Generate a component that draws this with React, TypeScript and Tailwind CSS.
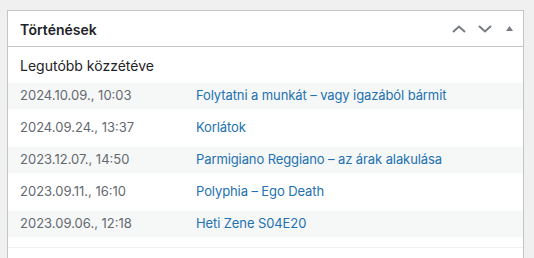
const POSTS = [
  { date: "2024.10.09., 10:03", title: "Folytatni a munkát – vagy igazából bármit" },
  { date: "2024.09.24., 13:37", title: "Korlátok" },
  { date: "2023.12.07., 14:50", title: "Parmigiano Reggiano – az árak alakulása" },
  { date: "2023.09.11., 16:10", title: "Polyphia – Ego Death" },
  { date: "2023.09.06., 12:18", title: "Heti Zene S04E20" },
];

function Chevron({ up }: { up?: boolean }) {
  return (
    <svg width="14" height="8" viewBox="0 0 14 8" fill="none" stroke="#787c82" strokeWidth={2}>
      <path d={up ? "M1 7L7 1.5L13 7" : "M1 1L7 6.5L13 1"} />
    </svg>
  );
}

export default function App() {
  return (
    <div
      className="w-[534px] h-[258px] overflow-hidden bg-[#f0f0f1] pt-[10px] pl-[7px] pr-[10px]"
      style={{ fontFamily: "Inter, 'Noto Sans', sans-serif" }}
    >
      <div className="bg-white border border-[#c3c4c7] h-[300px]">
        <div className="h-[36px] flex items-center justify-between border-b border-[#c3c4c7] pl-[12px] pr-[10px]">
          <h2 className="text-[14px] font-semibold text-[#1d2327] pt-[1px]">Történések</h2>
          <div className="flex items-center">
            <span className="w-[26px] flex justify-center">
              <Chevron up />
            </span>
            <span className="w-[26px] flex justify-center">
              <Chevron />
            </span>
            <span className="w-[15px] flex justify-end">
              <svg width="7" height="5" viewBox="0 0 7 5">
                <path d="M0 5L3.5 0L7 5Z" fill="#787c82" />
              </svg>
            </span>
          </div>
        </div>
        <div className="border-b border-[#f0f0f1] pb-[4px]">
          <h3 className="text-[14px] text-[#1d2327] px-[12px] h-[36px] flex items-center">Legutóbb közzétéve</h3>
          <ul>
            {POSTS.map((p, i) => (
              <li
                key={p.date}
                className={`flex items-center h-[26px] mb-[6px] px-[12px] text-[13px] ${i % 2 === 0 ? "bg-[#f6f7f7]" : ""}`}
              >
                <span className="w-[176px] shrink-0 text-[#646970]">{p.date}</span>
                <a className="text-[#2271b1] tracking-[-0.1px]">{p.title}</a>
              </li>
            ))}
          </ul>
        </div>
      </div>
    </div>
  );
}
